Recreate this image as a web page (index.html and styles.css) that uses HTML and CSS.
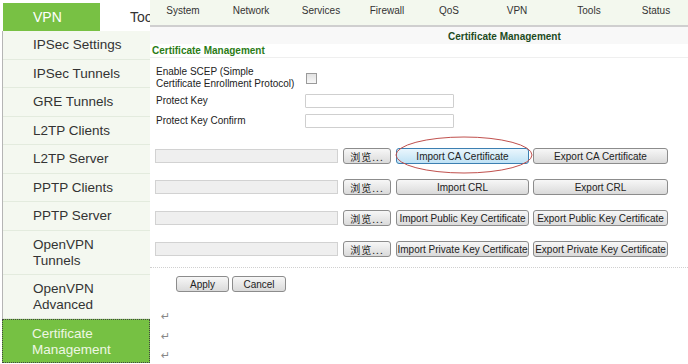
FILE: index.html
```html
<!DOCTYPE html>
<html lang="en">
<head>
  <meta charset="UTF-8" />
  <title>Certificate Management</title>
  <link rel="stylesheet" href="styles.css">
</head>
<body>
  <!-- Left menu -->
  <div class="side">
    <div class="side-top">
      <div class="tab">VPN</div>
      <div class="tab-next">Tools</div>
    </div>
    <div class="side-menu">
      <div class="side-item">IPSec Settings</div>
      <div class="side-item">IPSec Tunnels</div>
      <div class="side-item">GRE Tunnels</div>
      <div class="side-item">L2TP Clients</div>
      <div class="side-item">L2TP Server</div>
      <div class="side-item">PPTP Clients</div>
      <div class="side-item">PPTP Server</div>
      <div class="side-item double">OpenVPN<br>Tunnels</div>
      <div class="side-item double">OpenVPN<br>Advanced</div>
      <div class="side-item double active">Certificate<br>Management</div>
    </div>
  </div>

  <!-- Page -->
  <div class="main">
    <div class="nav">
      <span>System</span>
      <span>Network</span>
      <span>Services</span>
      <span>Firewall</span>
      <span>QoS</span>
      <span>VPN</span>
      <span>Tools</span>
      <span>Status</span>
    </div>
    <div class="page-title">Certificate Management</div>
    <div class="section-title">Certificate Management</div>

    <div class="form">
      <div class="form-row scep">
        <div class="label">Enable SCEP (Simple<br>Certificate Enrollment Protocol)</div>
        <span class="check"></span>
      </div>
      <div class="form-row key">
        <div class="label">Protect Key</div>
        <div class="text-input"></div>
      </div>
      <div class="form-row confirm">
        <div class="label">Protect Key Confirm</div>
        <div class="text-input"></div>
      </div>
    </div>

    <div class="files">
      <div class="file-row">
        <div class="file-input"></div>
        <button class="btn browse">浏览...</button>
        <button class="btn import hot">Import CA Certificate</button>
        <button class="btn export">Export CA Certificate</button>
      </div>
      <div class="file-row">
        <div class="file-input"></div>
        <button class="btn browse">浏览...</button>
        <button class="btn import">Import CRL</button>
        <button class="btn export">Export CRL</button>
      </div>
      <div class="file-row">
        <div class="file-input"></div>
        <button class="btn browse">浏览...</button>
        <button class="btn import">Import Public Key Certificate</button>
        <button class="btn export">Export Public Key Certificate</button>
      </div>
      <div class="file-row">
        <div class="file-input"></div>
        <button class="btn browse">浏览...</button>
        <button class="btn import">Import Private Key Certificate</button>
        <button class="btn export">Export Private Key Certificate</button>
      </div>
    </div>

    <div class="actions">
      <button class="btn apply">Apply</button>
      <button class="btn cancel">Cancel</button>
    </div>

    <div class="marks">
      <div>↵</div>
      <div>↵</div>
      <div>↵</div>
    </div>

    <!-- annotation ring -->
    <svg class="ring" width="146" height="40" viewBox="0 0 146 40">
      <ellipse cx="72" cy="20" rx="68" ry="18" fill="none" stroke="#c0504d" stroke-width="1"/>
    </svg>
  </div>
</body>
</html>
```

FILE: styles.css
```css
body {
  margin: 0;
  font-family: Arial, "Liberation Sans", sans-serif;
  display: flex;
  width: 688px;
  height: 364px;
  overflow: hidden;
  background: white;
}

.side {
  width: 150px;
  flex-shrink: 0;
  overflow: hidden;
}

.side-top {
  display: flex;
  height: 31px;
  white-space: nowrap;
}

.tab {
  flex-shrink: 0;
  margin: 3px 0 0 3px;
  width: 97px;
  height: 28px;
  box-sizing: border-box;
  padding-left: 30px;
  background: #78c144;
  color: white;
  font-size: 14px;
  line-height: 28px;
}

.tab-next {
  flex-shrink: 0;
  margin-left: 30px;
  padding-top: 3px;
  font-size: 14px;
  line-height: 28px;
  color: #333;
}

.side-menu {
  margin-left: 2px;
  border-left: 1px solid #b5b5b5;
  background: #f4f8f0;
}

.side-item {
  height: 28.5px;
  box-sizing: border-box;
  padding-left: 30px;
  border-bottom: 1px solid #e3ebde;
  font-size: 13.5px;
  line-height: 28px;
  color: #333;
}

.side-item.double {
  height: 44px;
  padding-top: 6px;
  line-height: 16px;
}

.side-item.active {
  background: #76c143;
  border: 1px dotted #444;
  color: #eef7e4;
  padding-left: 29px;
  margin-left: -1px;
}

.main {
  flex: 1;
  position: relative;
  font-size: 10px;
  color: #222;
  white-space: nowrap;
}

.nav {
  display: grid;
  grid-template-columns: 66px 70px 70px 62px 62px 74px 70px 64px;
  height: 25px;
  background: #f3f8ee;
  border-bottom: 2px solid #cfcfcf;
  text-align: center;
  line-height: 21px;
  color: #333;
}

.page-title {
  height: 17px;
  padding-left: 298px;
  background: #f8f8f8;
  font-weight: bold;
  color: #1d4b1d;
  line-height: 19px;
}

.section-title {
  height: 13px;
  padding-left: 2px;
  border-bottom: 1px solid #efefef;
  font-weight: bold;
  color: #2b7c16;
  line-height: 14px;
}

.form {
  padding-left: 6px;
}

.form-row {
  display: flex;
  align-items: center;
}

.label {
  width: 149px;
  line-height: 12px;
}

.scep {
  margin-top: 8px;
}

.key {
  margin-top: 4px;
}

.confirm {
  margin-top: 6px;
}

.check {
  width: 9px;
  height: 9px;
  margin-left: 1px;
  border: 1px solid #9a9a9a;
  background: linear-gradient(#e2e2e2, #f7f7f7);
}

.text-input {
  width: 149px;
  height: 14px;
  box-sizing: border-box;
  border: 1px solid #cfcfcf;
  border-radius: 1px;
  background: white;
}

.files {
  padding: 20px 0 0 5px;
  display: flex;
  flex-direction: column;
  gap: 15px;
}

.file-row {
  display: flex;
  align-items: center;
  height: 16px;
}

.file-input {
  flex-shrink: 0;
  width: 183px;
  height: 14px;
  box-sizing: border-box;
  border: 1px solid #d2d2d2;
  background: #efefef;
}

.btn {
  flex-shrink: 0;
  height: 16px;
  margin: 0;
  padding: 0;
  box-sizing: border-box;
  border: 1px solid #8c8c8c;
  border-radius: 3px;
  background: linear-gradient(#f7f7f7, #dadada);
  font-family: Arial, "Liberation Sans", sans-serif;
  font-size: 10px;
  color: #222;
  line-height: 13px;
  white-space: nowrap;
}

.browse {
  width: 48px;
  margin-left: 5px;
  font-family: "Noto Sans CJK SC", sans-serif;
  font-size: 10px;
  letter-spacing: 1px;
}

.import {
  width: 133px;
  margin-left: 5px;
}

.export {
  width: 135px;
  margin-left: 4px;
}

.hot {
  border-color: #3c7fb1;
  background: linear-gradient(#eaf6fd, #bfe2f5);
}

.actions {
  margin-top: 10px;
  border-top: 1px dotted #d0d0d0;
  padding: 8px 0 0 26px;
  display: flex;
  gap: 3px;
}

.apply {
  width: 53px;
}

.cancel {
  width: 54px;
}

.marks {
  margin-top: 15px;
  padding-left: 11px;
  font-family: "DejaVu Sans", sans-serif;
  font-size: 11px;
  line-height: 19.5px;
  color: #888;
}

.ring {
  position: absolute;
  left: 242px;
  top: 135px;
}
```
